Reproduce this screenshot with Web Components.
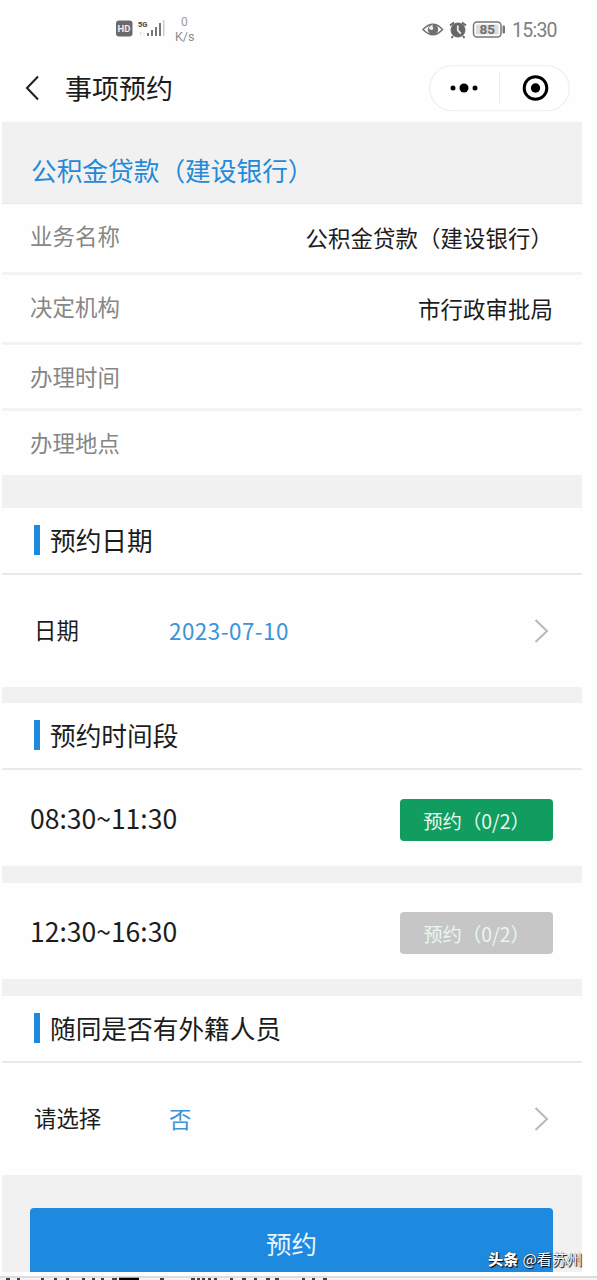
<!DOCTYPE html>
<html lang="zh-CN">
<head>
<meta charset="utf-8">
<title>事项预约</title>
<style>
html,body{margin:0;padding:0;background:#fefefe}
body{width:597px;height:1280px;overflow:hidden;font-family:"Noto Sans CJK SC",sans-serif;color:#1c1c1c}
</style>
</head>
<body>
<booking-page></booking-page>
<script>
const define = (name, html) => {
  const t = document.createElement('template');
  t.innerHTML = html;
  customElements.define(name, class extends HTMLElement {
    constructor() {
      super();
      this.attachShadow({ mode: 'open' }).appendChild(t.content.cloneNode(true));
    }
  });
};

define('status-bar', `<style>
:host{display:flex;height:56px;box-sizing:border-box;padding:4px 0 0 114px;align-items:center;color:#777}
.net{display:block;width:82px;height:36px}
.right{display:flex;align-items:center;margin-left:225px}
.time{font:19.5px/24px Roboto,sans-serif;letter-spacing:-.75px;margin:1px 0 0 5px;color:#808080}
svg{display:block}
</style>
<svg class="net" viewBox="0 0 82 36">
<rect x="2" y="8.500" width="16.500" height="16" rx="3" fill="#6a6a6a"/>
<text x="3.500" y="20" font-family="Roboto" font-size="9.500" font-weight="700" fill="#eee">HD</text>
<text x="24" y="14.500" font-family="Roboto" font-size="7.500" font-weight="900" fill="#555">5G</text>
<text x="25" y="23.500" font-family="Roboto" font-size="6" fill="#ccc">1↑</text>
<g fill="#777"><rect x="33" y="21" width="2" height="3"/><rect x="37" y="18" width="2" height="6"/><rect x="41" y="15" width="2" height="9"/><rect x="45" y="11" width="2" height="13"/><rect x="49" y="8" width="1.500" height="16" fill="#ccc"/></g>
<text x="67" y="14" font-family="Roboto" font-size="12" fill="#999">0</text>
<text x="61" y="29" font-family="Roboto" font-size="12.500" fill="#8b8b8b">K/s</text>
</svg>
<div class="right">
<svg width="86" height="24" viewBox="0 0 86 24">
<path d="M2 11.500Q12 1 21.500 11.500Q12 22 2 11.500Z" fill="none" stroke="#707070" stroke-width="1.500"/>
<circle cx="12" cy="11.500" r="5.200" fill="#707070"/><path d="M7.500 10q2-3 4.500-3.500q-1 1.500 0 3t-1 2.500q-2.500 0-3.500-2z" fill="#eee"/>
<g stroke="#666" fill="#666"><circle cx="37" cy="12" r="7"/><path d="M29 7.500l4-3M45 7.500l-4-3M32 18l-1.500 2M42 18l1.500 2" stroke-width="2"/></g>
<path d="M36.800 7.500v5l3 3" fill="none" stroke="#eee" stroke-width="1.800"/>
<rect x="52.500" y="4" width="27.500" height="15" rx="3.500" fill="none" stroke="#777" stroke-width="1.500"/>
<rect x="55" y="6.500" width="22.500" height="10" rx="1" fill="#ddd"/>
<rect x="81.500" y="7.500" width="2.500" height="8" rx="1" fill="#777"/>
<text x="58.500" y="16.200" font-family="Roboto" font-size="13.500" font-weight="700" fill="#707070">85</text>
</svg>
<span class="time">15:30</span></div>`);

define('mini-capsule', `<style>:host{display:block;width:141px;height:47px}svg{display:block}</style>
<svg width="141" height="47" viewBox="0 0 141 47">
<rect x=".75" y=".75" width="139.500" height="45" rx="22.500" fill="#fff" stroke="#ededed" stroke-width="1.200"/>
<path d="M70.500 8v30" stroke="#ececec"/>
<circle cx="24" cy="23" r="2.500"/><circle cx="35" cy="23" r="4.500"/><circle cx="46" cy="23" r="2.500"/>
<circle cx="106.500" cy="23" r="11.300" fill="none" stroke="#000" stroke-width="3"/><circle cx="106.500" cy="23" r="4.700"/>
</svg>`);

define('nav-bar', `<style>
:host{display:flex;height:66px;box-sizing:border-box;padding:0 27px 0 24px;align-items:center}
svg{display:block}
.t{font-size:27px;line-height:40px;margin-left:25px;flex:1;margin-top:-2px}
mini-capsule{margin-top:-1px}
.back{margin-top:-3px}
</style>
<svg class="back" width="16" height="26" viewBox="0 0 16 26"><path d="M14 1.500L3 13l11 11.500" fill="none" stroke="#222" stroke-width="2.100"/></svg>
<span class="t"><slot></slot></span><mini-capsule></mini-capsule>`);

define('service-title', `<style>
:host{display:flex;height:82px;box-sizing:border-box;padding:16px 0 0 29px;background:#f1f1f1;border-bottom:1.500px solid #e9e9e9;color:#2489d8;font-size:25.700px;line-height:64px}
</style><slot></slot>`);

define('info-row', `<style>
:host{display:flex;box-sizing:border-box;justify-content:space-between;height:var(--h,70px);padding:0 29px 0 28px;border-bottom:var(--line,3px) solid #f3f3f3;font-size:22.400px;line-height:var(--lh,62px);letter-spacing:.1px}
.l{color:#868686}.v{padding-top:2px}
</style><span class="l"><slot name="label"></slot></span><span class="v"><slot></slot></span>`);

define('section-gap', `<style>:host{display:block;height:var(--h,16px);background:#f1f1f1}</style>`);

define('section-head', `<style>
:host{display:flex;align-items:center;box-sizing:border-box;height:67px;padding-left:32px;border-bottom:2px solid #e9e9e9;font-size:25.700px;line-height:40px}
i{width:6px;height:30px;background:#1d89df;margin:-1px 10px 0 0}
span{margin-top:-2px}
</style><i></i><span><slot></slot></span>`);

define('picker-row', `<style>
:host{display:flex;align-items:center;box-sizing:border-box;height:112px;padding:0 33px 0 32px;font-size:22.400px;line-height:34px}
.l{width:135px;margin-top:-4px}.v{flex:1;color:#3b94d8;letter-spacing:var(--ls,0);margin-top:-3px}svg{display:block}
</style><span class="l"><slot name="label"></slot></span><span class="v"><slot></slot></span>
<svg width="15" height="24" viewBox="0 0 15 24"><path d="M1.500 1L13 12L1.500 23" fill="none" stroke="#b9b9b9" stroke-width="2"/></svg>`);

define('time-slot', `<style>
:host{display:flex;align-items:center;justify-content:space-between;box-sizing:border-box;height:96px;padding:4px 29px 0 28px;font-size:26.500px}
.t{line-height:40px;margin-top:-4px}
.b{width:153px;height:42px;border-radius:4px;background:var(--c,#119d5f);color:#e8f7ef;font-size:19.400px;line-height:43px;text-align:center;white-space:nowrap}
</style><span class="t"><slot></slot></span><span class="b"><slot name="action"></slot></span>`);

define('submit-area', `<style>
:host{display:flex;box-sizing:border-box;height:97px;padding:33px 29px 0 28px;background:#f1f1f1}
div{flex:1;background:#1d89df;border-radius:4px 4px 0 0;color:#e6f4fc;font-size:25.500px;line-height:69px;text-align:center;overflow:hidden}
</style><div><slot></slot></div>`);

/* Upper edge of the article line that continues under the fold. */
define('article-edge', `<style>:host{display:block;height:8px}svg{display:block}</style>
<svg width="597" height="8"><path d="M0 5h597" stroke="#dcdcdc" stroke-width="2"/><path d="M0 7h597" stroke="#f4f4f4" stroke-width="2"/>
<path d="M6 7h4M17 7h3M41 7h3M54 7h3M66 7h3M82 7h3M92 7h3M101 7h3M112 7h5M160 7h4M191 7h4M197 7h3M202 7h3M208 7h3M214 7h3M230 7h3M242 7h4M254 7h3M266 7h4M275 7h4M302 7h3M312 7h3M323 7h4" stroke="#4b3d40" stroke-width="2"/><path d="M119 7h20" stroke="#000" stroke-width="2.500"/></svg>`);

define('source-mark', `<style>
:host{position:absolute;left:488px;top:1247px;display:flex;gap:4px;font-size:15.200px;line-height:23px;color:#fff;text-shadow:1px 1px 1px #000,0 0 1px #222;white-space:nowrap}
b{font-weight:900}
</style><b><slot name="brand"></slot></b><span><slot></slot></span>`);

define('booking-page', `<style>
:host{display:block;width:597px;height:1280px;overflow:hidden}
main{width:580px;margin-left:2px}
</style>
<status-bar></status-bar>
<nav-bar>事项预约</nav-bar>
<main>
<service-title>公积金贷款（建设银行）</service-title>
<info-row style="--h:71px;--lh:63px"><span slot="label">业务名称</span>公积金贷款（建设银行）</info-row>
<info-row><span slot="label">决定机构</span>市行政审批局</info-row>
<info-row style="--h:66px"><span slot="label">办理时间</span></info-row>
<info-row style="--h:64px;--line:0px"><span slot="label">办理地点</span></info-row>
<section-gap style="--h:33px"></section-gap>
<section-head>预约日期</section-head>
<picker-row style="--ls:.5px"><span slot="label">日期</span>2023-07-10</picker-row>
<section-gap></section-gap>
<section-head>预约时间段</section-head>
<time-slot>08:30~11:30<span slot="action">预约（0/2）</span></time-slot>
<section-gap style="--h:17px"></section-gap>
<time-slot style="--c:#c6c6c6">12:30~16:30<span slot="action">预约（0/2）</span></time-slot>
<section-gap style="--h:17px"></section-gap>
<section-head>随同是否有外籍人员</section-head>
<picker-row><span slot="label">请选择</span>否</picker-row>
<submit-area>预约</submit-area>
</main>
<article-edge></article-edge>
<source-mark><span slot="brand">头条</span>@看苏州</source-mark>`);
</script>
</body>
</html>
